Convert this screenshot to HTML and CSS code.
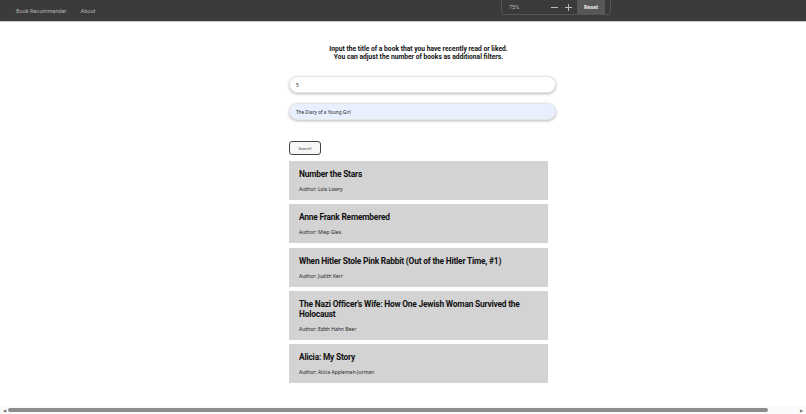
FILE: index.html
```html
<!DOCTYPE html>
<html>
<head>
<meta charset="utf-8">
<link rel="stylesheet" href="styles.css">
</head>
<body>
<div class="page">
  <nav class="nav">
    <span class="nav-link">Book Recommender</span>
    <span class="nav-link">About</span>
  </nav>
  <div class="zoom-pop">
    <span class="zoom-val">75%</span>
    <span class="zoom-btn">
      <svg width="7" height="7" viewBox="0 0 7 7"><path d="M0 3.5H7" stroke="#bbb" stroke-width="1"/></svg>
    </span>
    <span class="zoom-btn">
      <svg width="7" height="7" viewBox="0 0 7 7"><path d="M0 3.5H7M3.5 0V7" stroke="#bbb" stroke-width="1"/></svg>
    </span>
    <span class="zoom-reset">Reset</span>
  </div>
  <main class="main">
    <div class="column">
      <h2 class="intro">Input the title of a book that you have recently read or liked.<br>You can adjust the number of books as additional filters.</h2>
      <div class="field">5</div>
      <div class="field field-filled">The Diary of a Young Girl</div>
      <button class="search">Search!</button>
      <div class="results">
        <div class="card"><h3 class="title">Number the Stars</h3><p class="author">Author: Lois Lowry</p></div>
        <div class="card"><h3 class="title">Anne Frank Remembered</h3><p class="author">Author: Miep Gies</p></div>
        <div class="card"><h3 class="title">When Hitler Stole Pink Rabbit (Out of the Hitler Time, #1)</h3><p class="author">Author: Judith Kerr</p></div>
        <div class="card"><h3 class="title">The Nazi Officer's Wife: How One Jewish Woman Survived the Holocaust</h3><p class="author">Author: Edith Hahn Beer</p></div>
        <div class="card"><h3 class="title">Alicia: My Story</h3><p class="author">Author: Alicia Appleman-Jurman</p></div>
      </div>
    </div>
  </main>
  <div class="hscroll">
    <span class="arrow">◀</span>
    <div class="track"><div class="thumb"></div></div>
    <span class="arrow">▶</span>
  </div>
</div>
</body>
</html>
```
FILE: styles.css
```css
* { box-sizing: border-box; }
html, body { margin: 0; padding: 0; }
body {
  font-family: Roboto, "Noto Sans", sans-serif;
  background: #fff;
  color: #111;
  width: 806px;
  height: 414px;
  overflow: hidden;
}
.page {
  position: relative;
  height: 414px;
  display: flex;
  flex-direction: column;
}
.nav {
  height: 22px;
  background: #3b3b3b;
  border-bottom: 1px solid #c8c8c8;
  display: flex;
  align-items: center;
  padding-left: 16px;
  gap: 14px;
}
.nav-link {
  color: #b4b4b4;
  font-size: 5.6px;
  font-family: Roboto, sans-serif;
}
.zoom-pop {
  position: absolute;
  left: 501px;
  top: -1px;
  width: 110px;
  height: 16px;
  background: #3a3a3a;
  border: 1px solid #555;
  border-radius: 0 0 3px 3px;
  display: flex;
  align-items: center;
  padding-left: 7px;
  font-size: 5.5px;
  color: #bdbdbd;
}
.zoom-val { width: 42px; }
.zoom-btn { width: 14px; display: flex; align-items: center; }
.zoom-reset {
  margin-left: -2px;
  background: #575757;
  color: #eee;
  height: 14px;
  width: 28px;
  display: flex;
  align-items: center;
  justify-content: center;
  font-weight: 700;
}
.main {
  padding-left: 289px;
}
.column {
  width: 259px;
}
.intro {
  margin: 23px 0 0;
  text-align: center;
  font-size: 6.7px;
  line-height: 8px;
  font-weight: 700;
  color: #111;
}
.field {
  width: 267px;
  height: 17px;
  border-radius: 9px;
  background: #fff;
  border: 1px solid #e6e6e6;
  box-shadow: 0 1px 3px rgba(0,0,0,0.28);
  display: flex;
  align-items: center;
  padding-left: 6px;
  font-family: "Noto Sans", sans-serif;
  font-size: 4.7px;
  color: #222;
  margin-top: 15px;
}
.field-filled {
  background: #e8f0fe;
  margin-top: 10px;
}
.search {
  display: block;
  margin-top: 21px;
  width: 32px;
  height: 14px;
  padding: 0;
  border: 1.5px solid #444;
  border-radius: 3px;
  background: #f7f7f7;
  font-family: "Noto Sans", sans-serif;
  font-size: 3.8px;
  color: #333;
}
.results {
  margin-top: 6px;
  display: flex;
  flex-direction: column;
  gap: 4.3px;
}
.card {
  background: #d3d3d3;
  padding: 8px 10px 8px;
}
.title {
  margin: 0 0 7px;
  font-size: 8.4px;
  letter-spacing: -0.2px;
  line-height: 10px;
  font-weight: 700;
  color: #111;
}
.author {
  margin: 0;
  font-family: "Noto Sans", sans-serif;
  font-size: 5px;
  line-height: 6px;
  color: #222;
}
.hscroll {
  margin-top: auto;
  height: 8px;
  display: flex;
  align-items: center;
  background: #fafafa;
  padding: 0 1px;
}
.arrow {
  font-size: 4px;
  color: #666;
  width: 7px;
  text-align: center;
}
.track {
  flex: 1;
  height: 4px;
}
.thumb {
  width: 760px;
  height: 4px;
  border-radius: 2px;
  background: #8c8c8c;
}
```
